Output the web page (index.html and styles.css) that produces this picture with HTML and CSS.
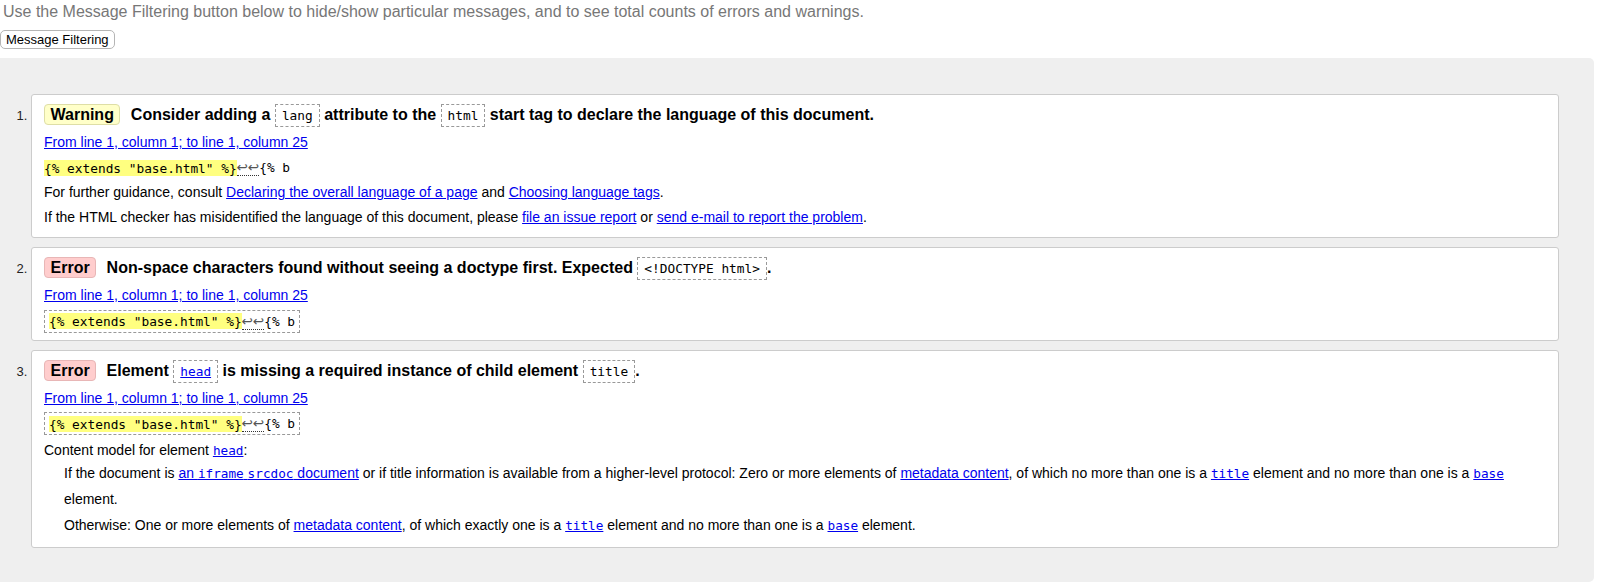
FILE: index.html
```html
<!DOCTYPE html>
<html>
<head>
<meta charset="utf-8">
<title>Messages</title>
<link rel="stylesheet" href="styles.css">
</head>
<body>
<p class="intro">Use the Message Filtering button below to hide/show particular messages, and to see total counts of errors and warnings.</p>
<div class="filter-row"><button class="filter-btn" type="button">Message Filtering</button></div>
<div class="results">
  <ol class="messages">
    <li class="msg">
      <p class="title"><strong class="badge warning">Warning</strong> Consider adding a <code class="box">lang</code> attribute to the <code class="box">html</code> start tag to declare the language of this document.</p>
      <p class="line"><a href="#">From line 1, column 1; to line 1, column 25</a></p>
      <p class="line extract"><code class="src"><mark class="hl">{% extends "base.html" %}</mark><span class="lf">↩↩</span>{% b</code></p>
      <p class="line">For further guidance, consult <a href="#">Declaring the overall language of a page</a> and <a href="#">Choosing language tags</a>.</p>
      <p class="line">If the HTML checker has misidentified the language of this document, please <a href="#">file an issue report</a> or <a href="#">send e-mail to report the problem</a>.</p>
    </li>
    <li class="msg">
      <p class="title"><strong class="badge error">Error</strong> Non-space characters found without seeing a doctype first. Expected <code class="box">&lt;!DOCTYPE html&gt;</code>.</p>
      <p class="line"><a href="#">From line 1, column 1; to line 1, column 25</a></p>
      <p class="extract boxed"><code class="src"><mark class="hl">{% extends "base.html" %}</mark><span class="lf">↩↩</span>{% b</code></p>
    </li>
    <li class="msg">
      <p class="title"><strong class="badge error">Error</strong> Element <code class="box"><a href="#">head</a></code> is missing a required instance of child element <code class="box">title</code>.</p>
      <p class="line"><a href="#">From line 1, column 1; to line 1, column 25</a></p>
      <p class="extract boxed"><code class="src"><mark class="hl">{% extends "base.html" %}</mark><span class="lf">↩↩</span>{% b</code></p>
      <dl class="model">
        <dt>Content model for element <a href="#"><code class="ic">head</code></a>:</dt>
        <dd>
          <p>If the document is <a href="#">an <code class="ic">iframe</code> <code class="ic">srcdoc</code> document</a> or if title information is available from a higher-level protocol: Zero or more elements of <a href="#">metadata content</a>, of which no more than one is a <a href="#"><code class="ic">title</code></a> element and no more than one is a <a href="#"><code class="ic">base</code></a> element.</p>
          <p>Otherwise: One or more elements of <a href="#">metadata content</a>, of which exactly one is a <a href="#"><code class="ic">title</code></a> element and no more than one is a <a href="#"><code class="ic">base</code></a> element.</p>
        </dd>
      </dl>
    </li>
  </ol>
</div>
</body>
</html>
```
FILE: styles.css
```css
html, body {
  margin: 0;
  padding: 0;
  background: #fff;
}
body {
  font-family: "Liberation Sans", Arial, sans-serif;
  font-size: 14px;
  color: #000;
}
.intro {
  margin: 0;
  padding-left: 3px;
  font-size: 16px;
  line-height: 24px;
  color: #777;
}
.filter-row {
  margin-top: 6px;
  height: 19px;
}
.filter-btn {
  display: block;
  height: 19px;
  margin: 0;
  padding: 0 5px;
  font-family: "Liberation Sans", Arial, sans-serif;
  font-size: 13px;
  line-height: 15px;
  color: #000;
  background: #fff;
  border: 1px solid #b5b5b5;
  border-radius: 5px;
}
.results {
  margin: 9px 10px 0 0;
  padding: 36px 35px 34px 0;
  background: #efefef;
  border-radius: 0 5px 5px 0;
}
.messages {
  margin: 0;
  padding: 0 0 0 31px;
  list-style: decimal outside;
}
.msg {
  background: #fff;
  border: 1px solid #ccc;
  border-radius: 3px;
  padding: 0 12px 7px;
  margin-bottom: 9px;
}
.msg:last-child {
  margin-bottom: 0;
  padding-bottom: 8px;
}
.msg::marker {
  color: #222;
  font-size: 13px;
}
.title {
  margin: 8px 0 2px;
  font-size: 16px;
  font-weight: bold;
  line-height: 24px;
}
.badge {
  display: inline-block;
  padding: 0 5.5px;
  line-height: 19px;
  border: 1px solid;
  border-radius: 4px;
  margin-right: 6px;
  vertical-align: 0;
}
.warning {
  background: #ffffc9;
  border-color: #dedea6;
}
.error {
  background: #ffcdcd;
  border-color: #e8b6b6;
}
.box {
  font-family: "DejaVu Sans Mono", "Liberation Mono", monospace;
  font-size: 12.8px;
  font-weight: normal;
  padding: 3px 6px;
  border: 1px dashed #999;
  background: #fff;
}
.box a {
  color: #0000ee;
}
.line {
  margin: 0;
  line-height: 25px;
}
a {
  color: #0000ee;
  text-decoration: underline;
}
.src {
  font-family: "DejaVu Sans Mono", "Liberation Mono", monospace;
  font-size: 12.8px;
}
.hl {
  background: #ffff80;
  color: #000;
  padding: 0.5px 0;
}
.lf {
  font-family: "DejaVu Sans", sans-serif;
  font-size: 13.5px;
  color: #555;
  border-bottom: 1px dotted #333;
}
.extract.boxed {
  width: fit-content;
  margin: 1.5px 0 0;
  padding: 2px 4px;
  line-height: 16px;
  border: 1px dashed #999;
}
.model {
  margin: 5px 0 0;
}
.model dt {
  line-height: 21px;
}
.model dd {
  margin: 0 0 0 20px;
}
.model dd p {
  margin: 0;
  line-height: 24.5px;
}
.model dd p + p {
  margin-top: 2px;
}
.ic {
  font-family: "DejaVu Sans Mono", "Liberation Mono", monospace;
  font-size: 12.7px;
}
```
